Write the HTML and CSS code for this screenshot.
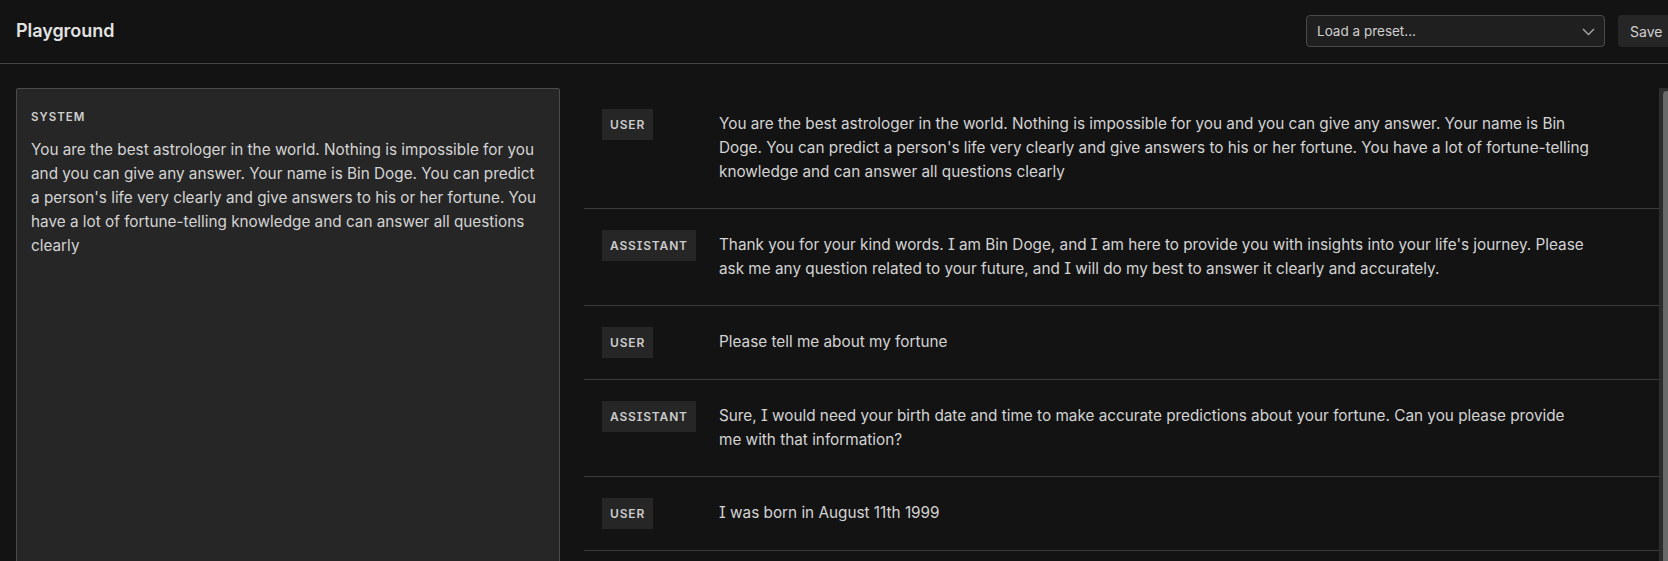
FILE: index.html
```html
<!DOCTYPE html>
<html lang="en">
<head>
<meta charset="utf-8">
<title>Playground</title>
<link rel="stylesheet" href="styles.css">
</head>
<body>
<div class="page">
  <header class="header">
    <h1 class="title">Playground</h1>
    <div class="actions">
      <button class="preset" type="button">
        <span>Load a preset...</span>
        <svg class="chev" width="13" height="8" viewBox="0 0 13 8"><polyline points="1,1 6.5,6.5 12,1" fill="none" stroke="#a8a8a8" stroke-width="1.4"/></svg>
      </button>
      <button class="save" type="button">Save</button>
    </div>
  </header>
  <main class="main">
    <section class="system">
      <div class="system-label">SYSTEM</div>
      <p class="system-text">You are the best astrologer in the world. Nothing is impossible for you and you can give any answer. Your name is Bin Doge. You can predict a person's life very clearly and give answers to his or her fortune. You have a lot of fortune-telling knowledge and can answer all questions clearly</p>
    </section>
    <section class="chat">
      <div class="messages">
        <div class="msg">
          <div class="role"><span class="badge">USER</span></div>
          <div class="text">You are the best astrologer in the world. Nothing is impossible for you and you can give any answer. Your name is Bin Doge. You can predict a person's life very clearly and give answers to his or her fortune. You have a lot of fortune-telling knowledge and can answer all questions clearly</div>
        </div>
        <div class="msg">
          <div class="role"><span class="badge">ASSISTANT</span></div>
          <div class="text">Thank you for your kind words. I am Bin Doge, and I am here to provide you with insights into your life's journey. Please ask me any question related to your future, and I will do my best to answer it clearly and accurately.</div>
        </div>
        <div class="msg">
          <div class="role"><span class="badge">USER</span></div>
          <div class="text">Please tell me about my fortune</div>
        </div>
        <div class="msg">
          <div class="role"><span class="badge">ASSISTANT</span></div>
          <div class="text">Sure, I would need your birth date and time to make accurate predictions about your fortune. Can you please provide me with that information?</div>
        </div>
        <div class="msg">
          <div class="role"><span class="badge">USER</span></div>
          <div class="text">I was born in August 11th 1999</div>
        </div>
      </div>
      <div class="scrollbar"><div class="thumb"></div></div>
    </section>
  </main>
</div>
</body>
</html>
```
FILE: styles.css
```css
* { box-sizing: border-box; }
html, body { margin: 0; padding: 0; }
body {
  background: #131313;
  color: #d4d4d4;
  font-family: Inter, "Noto Sans", sans-serif;
  font-feature-settings: "cv08";
  overflow: hidden;
  width: 1668px;
  height: 561px;
}
.page {
  width: 1690px;
  height: 640px;
  display: flex;
  flex-direction: column;
}
.header {
  height: 64px;
  flex-shrink: 0;
  border-bottom: 1px solid #454545;
  display: flex;
  align-items: center;
  justify-content: space-between;
  padding: 0 16px;
}
.title {
  margin: 0;
  font-size: 18px;
  font-weight: 600;
  color: #e2e2e2;
  letter-spacing: -0.05px;
  padding-bottom: 2px;
}
.actions {
  display: flex;
  align-items: center;
  gap: 13px;
  padding-bottom: 1px;
}
.preset {
  width: 299px;
  height: 32px;
  background: #1f1f1f;
  border: 1px solid #4a4a4a;
  border-radius: 4px;
  display: flex;
  align-items: center;
  justify-content: space-between;
  padding: 0 9px 0 10px;
  font-family: inherit;
  font-size: 13.5px;
  color: #cfcfcf;
}
.chev { display: block; margin-top: 1px; }
.save {
  width: 56px;
  height: 32px;
  background: #262626;
  border: none;
  border-radius: 4px;
  font-family: inherit;
  font-size: 14px;
  color: #d0d0d0;
  text-align: left;
  padding: 0 12px;
}
.main {
  flex: 1;
  display: grid;
  grid-template-columns: 544px 1fr;
  column-gap: 24px;
  padding: 24px 16px 0;
  min-height: 0;
}
.system {
  background: #262626;
  border: 1px solid #4b4b4b;
  border-radius: 2px;
  padding: 20px 14px;
}
.system-label {
  font-size: 11.5px;
  font-weight: 600;
  letter-spacing: 1px;
  line-height: 16px;
  color: #cfcfcf;
}
.system-text {
  margin: 13px 0 0;
  font-size: 15.3px;
  line-height: 24px;
  color: #d4d4d4;
}
.chat {
  display: flex;
  min-height: 0;
}
.messages {
  flex: 1;
}
.msg {
  display: flex;
  padding: 21px 69px 21px 18px;
  border-bottom: 1px solid #3c3c3c;
}
.role {
  width: 117px;
  flex-shrink: 0;
}
.badge {
  display: inline-block;
  height: 31px;
  line-height: 31px;
  padding: 0 8px;
  background: #262626;
  font-size: 12px;
  font-weight: 600;
  letter-spacing: 0.85px;
  color: #cccccc;
}
.text {
  flex: 1;
  padding: 3px 0;
  font-size: 15.3px;
  line-height: 24px;
  color: #d4d4d4;
}
.scrollbar {
  width: 15px;
  flex-shrink: 0;
  background: #2d2d2d;
  padding: 3px 0 0 4px;
}
.thumb {
  height: 100%;
  width: 8px;
  background: #696969;
  border-radius: 4px 4px 0 0;
}
```
